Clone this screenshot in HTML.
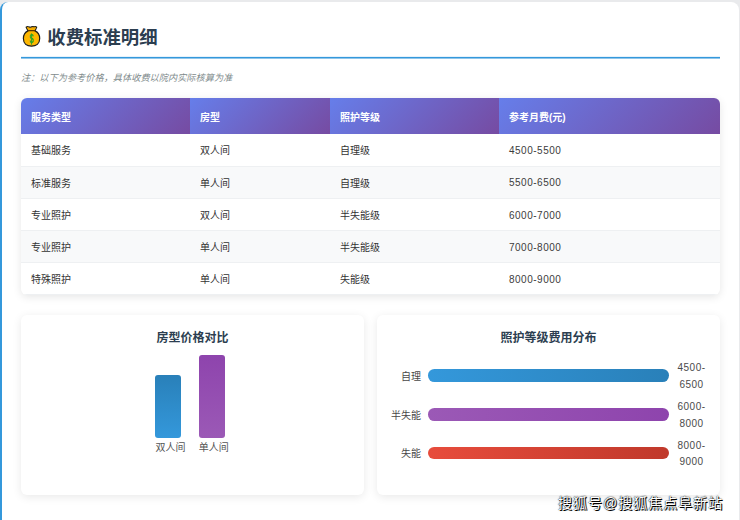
<!DOCTYPE html>
<html lang="zh-CN">
<head>
<meta charset="utf-8">
<title>收费标准明细</title>
<style>
*{box-sizing:border-box;margin:0;padding:0}
html,body{width:740px;height:520px;overflow:hidden;background:#e9eaec}
body{font-family:"Liberation Sans","Noto Sans CJK SC",sans-serif;color:#333;position:relative}
.card{position:absolute;left:0;top:2px;width:739px;height:530px;background:#fff;border-left:2px solid #3498db;border-radius:8px 8px 0 0;}
.title{position:absolute;left:19px;top:20px;width:699px;height:37px}
.title i{position:absolute;left:0;right:0;top:35px;height:1px;background:#3498db;box-shadow:0 1px 0 rgba(52,152,219,.55),0 -1px 0 rgba(52,152,219,.12)}
.title svg{position:absolute;left:1px;top:3px;width:20px;height:23px}
.title h2{position:absolute;left:26.300px;top:1.500px;font-size:18.4px;line-height:28px;font-weight:700;color:#2c3e50;white-space:nowrap}
.note{position:absolute;left:19px;top:69px;font-size:9.2px;line-height:14px;font-style:italic;color:#7f8c8d;white-space:nowrap}
table{position:absolute;left:19px;top:96.400px;width:699px;border-collapse:separate;border-spacing:0;border-radius:6px;overflow:hidden;box-shadow:0 2px 8px rgba(0,0,0,.1);font-size:10px;background:#fff}
th{height:36px;padding:0 10px;text-align:left;color:#fff;font-weight:700;background:linear-gradient(135deg,#667eea 0%,#764ba2 100%)}
td{height:32.180px;padding:0 10px;color:#333;border-bottom:1px solid #eef0f2}
tbody tr:nth-child(even) td{background:#f8f9fa}
td.n{letter-spacing:.5px;color:#3c3c3c;padding-top:1.400px}
.box{position:absolute;top:313px;width:343px;height:180px;background:#fff;border-radius:6px;box-shadow:0 2px 10px rgba(0,0,0,.09)}
.box h3{position:absolute;left:0;right:0;top:14.100px;text-align:center;font-size:12px;line-height:18px;font-weight:700;color:#2c3e50}
.vb{position:absolute;width:26px;border-radius:3px}
.vl{position:absolute;top:125.800px;width:40px;text-align:center;font-size:10px;line-height:14px;color:#555}
.hl{position:absolute;left:0;width:44px;text-align:right;font-size:10px;line-height:14px;color:#484848;margin-top:0.500px}
.hb{position:absolute;left:50.700px;width:241.500px;height:12.800px;border-radius:6.400px}
.hv{position:absolute;left:294.500px;width:40px;text-align:center;font-size:10px;line-height:16.500px;color:#4a4a4a;letter-spacing:.5px;margin-top:1.100px}
.wm{position:absolute;left:558px;top:493px;font-size:14px;line-height:20px;color:#fff;white-space:nowrap;text-shadow:1px 1px 0 #000,0 0 1px #000,0 0 1.500px #444;letter-spacing:1px}
</style>
</head>
<body>
<div class="card">
  <div class="title">
    <svg viewBox="0 0 20 23"><path d="M4.100 2.100Q5.400 1 6.900 1.900Q8.200 2.600 9.500 1.900Q10.800 1.200 12.100 1.900Q13.400 1 14.700 2.100L13 5.900C16.200 7.300 17.700 10.300 17.700 13.600C17.700 18.400 14.200 21.200 9.500 21.200C4.800 21.200 1.400 18.400 1.400 13.600C1.400 10.300 2.900 7.300 6 5.900Z" fill="#fdb700" stroke="#1d1d1b" stroke-width="1.200" stroke-linejoin="round"/><path d="M5.100 2.700Q6 2.100 6.900 2.700Q8.200 3.400 9.500 2.700Q10.800 2.100 12.100 2.700Q13.100 2.100 13.900 2.700L13 4.600H6Z" fill="#f0a800"/><path d="M6.200 5.600H12.800" stroke="#5a3600" stroke-width="1.100" stroke-linecap="round"/><path d="M9.500 8.400V19.600" stroke="#2aa52a" stroke-width=".9"/><text x="9.500" y="17.800" text-anchor="middle" font-family="Liberation Sans,sans-serif" font-size="12.500" font-weight="700" fill="#2aa52a" transform="translate(9.500 0) scale(.62 1) translate(-9.500 0)">$</text></svg>
    <h2>收费标准明细</h2><i></i>
  </div>
  <div class="note">注：以下为参考价格，具体收费以院内实际核算为准</div>
  <table>
    <colgroup><col style="width:169px"><col style="width:140px"><col style="width:169px"><col style="width:221px"></colgroup>
    <thead><tr><th>服务类型</th><th>房型</th><th>照护等级</th><th>参考月费(元)</th></tr></thead>
    <tbody>
    <tr><td>基础服务</td><td>双人间</td><td>自理级</td><td class="n">4500-5500</td></tr>
    <tr><td>标准服务</td><td>单人间</td><td>自理级</td><td class="n">5500-6500</td></tr>
    <tr><td>专业照护</td><td>双人间</td><td>半失能级</td><td class="n">6000-7000</td></tr>
    <tr><td>专业照护</td><td>单人间</td><td>半失能级</td><td class="n">7000-8000</td></tr>
    <tr><td>特殊照护</td><td>单人间</td><td>失能级</td><td class="n">8000-9000</td></tr>
    </tbody>
  </table>
  <div class="box" style="left:19px">
    <h3>房型价格对比</h3>
    <div class="vb" style="left:133.800px;top:59.600px;height:63.700px;background:linear-gradient(180deg,#2980b9,#3498db)"></div>
    <div class="vb" style="left:177.600px;top:40px;height:83.300px;background:linear-gradient(180deg,#8e44ad,#9b59b6)"></div>
    <div class="vl" style="left:129.500px">双人间</div>
    <div class="vl" style="left:172.800px">单人间</div>
  </div>
  <div class="box" style="left:375px">
    <h3>照护等级费用分布</h3>
    <div class="hl" style="top:54.0px">自理</div><div class="hb" style="top:54.0px;background:linear-gradient(90deg,#3498db,#2980b9)"></div><div class="hv" style="top:44.0px">4500-<br>6500</div>
    <div class="hl" style="top:93.0px">半失能</div><div class="hb" style="top:93.0px;background:linear-gradient(90deg,#9b59b6,#8e44ad)"></div><div class="hv" style="top:83.0px">6000-<br>8000</div>
    <div class="hl" style="top:131.700px">失能</div><div class="hb" style="top:131.700px;background:linear-gradient(90deg,#e74c3c,#c0392b)"></div><div class="hv" style="top:121.700px">8000-<br>9000</div>
  </div>
</div>
<div class="wm">搜狐号@搜狐焦点阜新站</div>
</body>
</html>
